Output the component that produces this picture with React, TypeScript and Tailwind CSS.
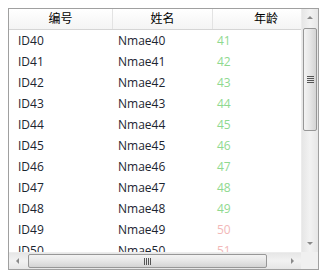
import React from "react";

const ROWS = Array.from({ length: 12 }, (_, i) => 40 + i);

function ageColor(age: number) {
  return age >= 50 ? "text-[#f2b8b8]" : "text-[#8fd98f]";
}

function Grip({ vertical }: { vertical?: boolean }) {
  return (
    <div className={`flex ${vertical ? "flex-col" : "flex-row"} gap-[1px]`}>
      {[0, 1, 2, 3].map((i) => (
        <div
          key={i}
          className={vertical ? "w-[7px] h-[1px] bg-[#555]" : "h-[7px] w-[1px] bg-[#555]"}
        />
      ))}
    </div>
  );
}

export default function App() {
  return (
    <div
      className="w-[327px] h-[279px] bg-white p-[8px]"
      style={{ fontFamily: '"Open Sans", "Noto Sans CJK SC", sans-serif' }}
    >
      <div className="w-[311px] h-[262px] border border-[#a0a0a0] grid grid-cols-[1fr_17px] grid-rows-[1fr_17px] bg-white">
        {/* content */}
        <div className="overflow-hidden">
          <div className="w-[304px]">
            <div className="flex h-[21px] border-b border-[#d5d5d5] bg-gradient-to-b from-white to-[#f4f4f4] text-[12px] text-black">
              <div className="w-[104px] flex-none flex items-center justify-center border-r border-[#e3e3e3]">编号</div>
              <div className="w-[100px] flex-none flex items-center justify-center border-r border-[#e3e3e3]">姓名</div>
              <div className="w-[100px] flex-none flex items-center justify-center pl-[6px]">年龄</div>
            </div>
            {ROWS.map((n) => (
              <div key={n} className="flex h-[21px] items-center text-[12px] text-[#1c2530]">
                <div className="w-[104px] flex-none pl-[9px]">ID{n}</div>
                <div className="w-[100px] flex-none pl-[5px]">Nmae{n}</div>
                <div className={`w-[100px] flex-none pl-[4px] ${ageColor(n + 1)}`}>{n + 1}</div>
              </div>
            ))}
          </div>
        </div>

        {/* vertical scrollbar */}
        <div className="flex flex-col bg-gradient-to-r from-[#e6e6e6] via-[#f2f2f2] to-[#e6e6e6] border-l border-[#ececec]">
          <div className="h-[17px] flex items-center justify-center">
            <div className="w-0 h-0 border-l-[3px] border-r-[3px] border-b-[3px] border-l-transparent border-r-transparent border-b-[#8a8a8a]" />
          </div>
          <div className="flex-1 relative">
            <div className="absolute left-[1px] right-[1px] top-[2px] h-[103px] rounded-[2px] border border-[#979797] bg-gradient-to-r from-[#f3f3f3] via-[#e6e6e6] to-[#d4d4d4] flex items-center justify-center">
              <Grip vertical />
            </div>
          </div>
          <div className="h-[17px] flex items-center justify-center">
            <div className="w-0 h-0 border-l-[3px] border-r-[3px] border-t-[3px] border-l-transparent border-r-transparent border-t-[#8a8a8a]" />
          </div>
        </div>

        {/* horizontal scrollbar */}
        <div className="flex flex-row bg-gradient-to-b from-[#e6e6e6] via-[#f2f2f2] to-[#e6e6e6] border-t border-[#ececec]">
          <div className="w-[17px] flex items-center justify-center">
            <div className="w-0 h-0 border-t-[3px] border-b-[3px] border-r-[3px] border-t-transparent border-b-transparent border-r-[#8a8a8a]" />
          </div>
          <div className="flex-1 relative">
            <div className="absolute top-[1px] bottom-[1px] left-[2px] w-[239px] rounded-[2px] border border-[#979797] bg-gradient-to-b from-[#f3f3f3] via-[#e6e6e6] to-[#d4d4d4] flex items-center justify-center">
              <Grip />
            </div>
          </div>
          <div className="w-[17px] flex items-center justify-center">
            <div className="w-0 h-0 border-t-[3px] border-b-[3px] border-l-[3px] border-t-transparent border-b-transparent border-l-[#8a8a8a]" />
          </div>
        </div>

        {/* corner */}
        <div className="bg-[#f0f0f0]" />
      </div>
    </div>
  );
}
